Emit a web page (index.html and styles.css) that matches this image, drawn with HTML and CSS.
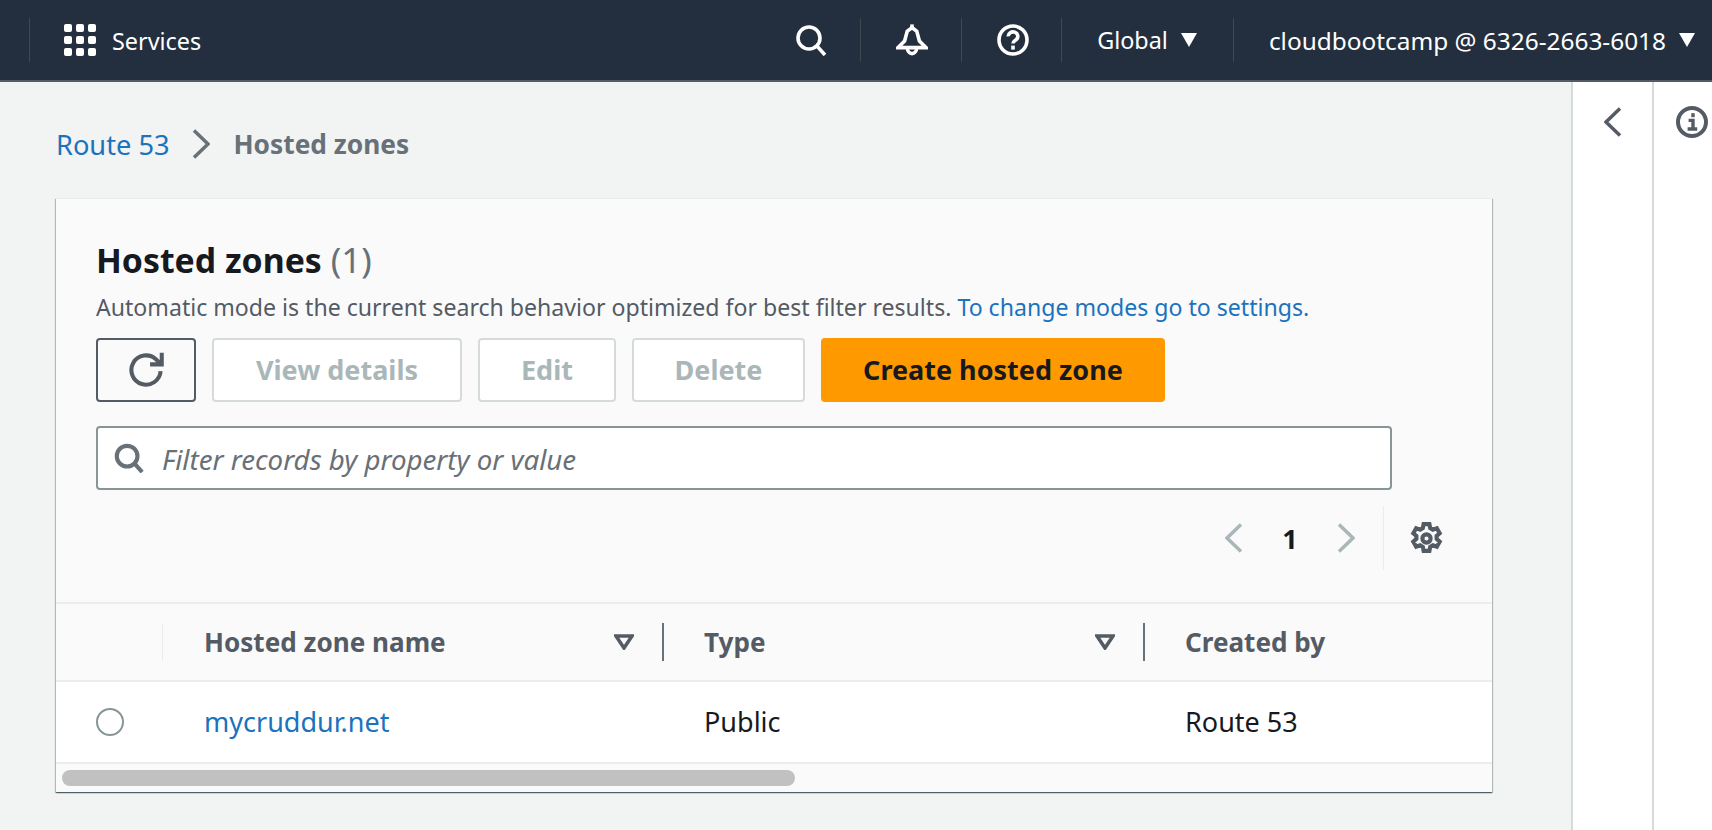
FILE: index.html
```html
<!DOCTYPE html>
<html lang="en">
<head>
    <meta charset="UTF-8">
    <meta name="viewport" content="width=device-width, initial-scale=1.0">
    <title>Route 53 - Hosted zones</title>
    <link rel="stylesheet" href="styles.css">
</head>
<body>
    <header class="topnav">
        <div class="nav-services">
            <svg class="grid-icon" viewBox="0 0 32 32">
                <rect x="0" y="0" width="8" height="8" rx="2"/><rect x="12" y="0" width="8" height="8" rx="2"/><rect x="24" y="0" width="8" height="8" rx="2"/>
                <rect x="0" y="12" width="8" height="8" rx="2"/><rect x="12" y="12" width="8" height="8" rx="2"/><rect x="24" y="12" width="8" height="8" rx="2"/>
                <rect x="0" y="24" width="8" height="8" rx="2"/><rect x="12" y="24" width="8" height="8" rx="2"/><rect x="24" y="24" width="8" height="8" rx="2"/>
            </svg>
            <span>Services</span>
        </div>
        <div class="nav-right">
            <div class="nav-item nav-search">
                <svg class="nav-icon" viewBox="0 0 16 16"><circle cx="7" cy="7" r="5.500"/><path d="M10.800 10.800l4.200 4.700"/></svg>
            </div>
            <div class="nav-item nav-bell">
                <svg class="nav-icon" viewBox="0 0 16 16"><path d="M8 1.800L5.600 3.600 4.300 8.500 1 11.800h14l-3.300-3.300-1.300-4.900z"/><path d="M8 .2v1.600"/><path d="M5.700 12a2.300 2.800 0 004.600 0"/></svg>
            </div>
            <div class="nav-item nav-help">
                <svg class="nav-icon" viewBox="0 0 16 16"><circle cx="8" cy="8" r="7"/><path d="M5.600 6.200a2.400 2.200 0 114.200 1.400c-.8.800-1.800 1-1.800 2.200"/><path d="M8 10.800v2"/></svg>
            </div>
            <div class="nav-item nav-region">
                <span>Global</span><span class="nav-caret"></span>
            </div>
            <div class="nav-item nav-account">
                <span>cloudbootcamp @ 6326-2663-6018</span><span class="nav-caret"></span>
            </div>
        </div>
    </header>

    <div class="layout">
        <main class="content">
            <nav class="breadcrumb">
                <a class="link" href="#">Route 53</a>
                <svg class="crumb-chevron" viewBox="0 0 18 30"><path d="M2 1.500L16 15 2 28.500"/></svg>
                <span class="crumb-current">Hosted zones</span>
            </nav>

            <section class="card">
                <div class="card-head">
                    <h1 class="card-title">Hosted zones <span class="count">(1)</span></h1>
                    <p class="card-desc">Automatic mode is the current search behavior optimized for best filter results. <a class="link" href="#">To change modes go to settings.</a></p>
                    <div class="actions">
                        <button class="btn btn-icon">
                            <svg viewBox="0 0 16 16"><path d="M14.500 8.500A6.500 6.500 0 1112.400 3.200L14.500 5.200"/><path d="M9.800 5.500h5.200V.3"/></svg>
                        </button>
                        <button class="btn btn-view" disabled>View details</button>
                        <button class="btn btn-edit" disabled>Edit</button>
                        <button class="btn btn-delete" disabled>Delete</button>
                        <button class="btn btn-primary">Create hosted zone</button>
                    </div>
                    <div class="filter">
                        <svg viewBox="0 0 16 16"><circle cx="7" cy="7" r="5.500"/><path d="M11 11l4 4.500"/></svg>
                        <span class="filter-text">Filter records by property or value</span>
                    </div>
                    <div class="pager">
                        <svg class="pager-chevron" viewBox="0 0 18 30"><path d="M16 1.500L2 15l14 13.500"/></svg>
                        <span class="page-num">1</span>
                        <svg class="pager-chevron" viewBox="0 0 18 30"><path d="M2 1.500L16 15 2 28.500"/></svg>
                        <div class="pager-settings">
                            <svg viewBox="0 0 16 16"><circle cx="8" cy="8" r="2"/><path d="M6.600 1h2.800l.4 2 1.300.7 1.900-.7 1.400 2.500-1.500 1.300v1.400l1.500 1.300-1.400 2.500-1.900-.7-1.300.7-.4 2H6.600l-.4-2-1.300-.7-1.900.7-1.400-2.500 1.500-1.300V6.800L1.600 5.500 3 3l1.900.7 1.300-.7z"/></svg>
                        </div>
                    </div>
                </div>

                <div class="table">
                    <div class="table-row table-header">
                        <div class="cell cell-select"></div>
                        <div class="cell cell-name">
                            <span>Hosted zone name</span>
                            <svg class="sort-caret" viewBox="0 0 20 16"><path d="M2 2h16l-8 12z"/></svg>
                        </div>
                        <div class="cell cell-type">
                            <span>Type</span>
                            <svg class="sort-caret" viewBox="0 0 20 16"><path d="M2 2h16l-8 12z"/></svg>
                        </div>
                        <div class="cell cell-created"><span>Created by</span></div>
                    </div>
                    <div class="table-row table-body">
                        <div class="cell cell-select"><span class="radio"></span></div>
                        <div class="cell cell-name"><a class="link" href="#">mycruddur.net</a></div>
                        <div class="cell cell-type">Public</div>
                        <div class="cell cell-created">Route 53</div>
                    </div>
                </div>
                <div class="scrollbar"><div class="scroll-thumb"></div></div>
            </section>
        </main>

        <aside class="side-panel side-toggle">
            <svg viewBox="0 0 18 30"><path d="M16 1.500L2 15l14 13.500"/></svg>
        </aside>
        <aside class="side-panel side-info">
            <svg viewBox="0 0 16 16"><circle cx="8" cy="8" r="7"/><path class="info-mark" d="M6.300 7.200h2.200v4.300M5.800 11.500h4.800"/><path class="info-mark" d="M8.500 3.600v2"/></svg>
        </aside>
    </div>
</body>
</html>
```

FILE: styles.css
```css
* {
    box-sizing: border-box;
}
html, body {
    height: 100%;
}
body {
    margin: 0;
    font-family: "Noto Sans", "Open Sans", sans-serif;
    font-size: 24px;
    color: #16191f;
    background-color: #f2f3f3;
    display: flex;
    flex-direction: column;
    overflow: hidden;
}
.link {
    color: #1b72bd;
    text-decoration: none;
}

/* top bar */
.topnav {
    flex: none;
    height: 82px;
    background-color: #232f3e;
    border-bottom: 2px solid #545b64;
    color: #fff;
    display: flex;
    align-items: center;
    justify-content: space-between;
    padding: 0 17px 0 29px;
}
.nav-services {
    height: 44px;
    display: flex;
    align-items: center;
    gap: 16px;
    padding-left: 34px;
    border-left: 1px solid #414750;
    font-size: 23.400px;
}
.nav-services span {
    padding-top: 1px;
}
.grid-icon {
    width: 32px;
    height: 32px;
    fill: #fff;
}
.nav-right {
    display: flex;
    align-items: center;
    font-size: 24.400px;
}
.nav-item {
    height: 44px;
    display: flex;
    align-items: center;
    border-right: 1px solid #414750;
}
.nav-item:last-child {
    border-right: 0;
}
.nav-icon {
    width: 32px;
    height: 32px;
    fill: none;
    stroke: #fff;
    stroke-width: 1.800;
}
.nav-search {
    padding: 0 33px 0 0;
}
.nav-bell {
    padding: 0 33px 0 35px;
}
.nav-help {
    padding: 0 32px 0 35px;
}
.nav-region {
    padding: 0 36px 0 35px;
    gap: 13px;
    font-size: 23.400px;
}
.nav-account {
    padding: 0 0 0 35px;
    gap: 13px;
}
.nav-caret {
    width: 0;
    height: 0;
    border-left: 8.500px solid transparent;
    border-right: 8.500px solid transparent;
    border-top: 14px solid #fff;
}

/* page */
.layout {
    flex: 1;
    display: flex;
    min-height: 0;
}
.content {
    flex: 1;
    padding: 0 79px 0 56px;
}
.breadcrumb {
    height: 116px;
    padding-top: 8px;
    display: flex;
    align-items: center;
    font-size: 27.200px;
}
.crumb-chevron {
    width: 18px;
    height: 30px;
    margin: 0 23px;
    fill: none;
    stroke: #687078;
    stroke-width: 3.500;
}
.crumb-current {
    font-size: 26.300px;
    font-weight: 700;
    color: #687078;
}
.side-panel {
    flex: none;
    background-color: #fff;
    border-left: 2px solid #d5dbdb;
}
.side-toggle {
    width: 81px;
    padding: 25px 0 0 31px;
}
.side-toggle svg {
    display: block;
    width: 18px;
    height: 30px;
    fill: none;
    stroke: #545b64;
    stroke-width: 3.500;
}
.side-info {
    width: 60px;
    padding: 24px 0 0 22px;
}
.side-info svg {
    display: block;
    width: 32px;
    height: 32px;
    fill: none;
    stroke: #545b64;
    stroke-width: 2;
}
.side-info .info-mark {
    stroke-width: 1.700;
}

/* card */
.card {
    height: 594px;
    background-color: #fafafa;
    box-shadow: 0 1px 1px 0 rgba(0, 28, 36, 0.5), 1px 1px 1px 0 rgba(0, 28, 36, 0.2), -1px 1px 1px 0 rgba(0, 28, 36, 0.2);
    border-top: 1px solid #eaeded;
}
.card-head {
    height: 405px;
    padding: 41px 0 0 40px;
    border-bottom: 2px solid #eaeded;
}
.card-title {
    margin: 0;
    font-size: 33.800px;
    line-height: 40px;
    font-weight: 700;
}
.count {
    font-size: 35px;
    font-weight: 400;
    color: #687078;
}
.card-desc {
    margin: 12px 0 16px;
    font-size: 23.100px;
    line-height: 30px;
    color: #545b64;
}
.actions {
    display: flex;
    gap: 16px;
}
.btn {
    height: 64px;
    font-family: inherit;
    font-size: 27px;
    font-weight: 700;
    border: 2px solid #d5dbdb;
    border-radius: 4px;
    background-color: #fff;
    color: #aab7b8;
    padding: 0 0 2px;
}
.btn-icon {
    width: 100px;
    border-color: #545b64;
    background-color: #fafafa;
    padding: 0;
}
.btn-icon svg {
    display: block;
    width: 36px;
    height: 36px;
    margin: 0 auto;
    fill: none;
    stroke: #545b64;
    stroke-width: 1.800;
}
.btn-view {
    width: 250px;
}
.btn-edit {
    width: 138px;
}
.btn-delete {
    width: 173px;
}
.btn-primary {
    width: 344px;
    border: 0;
    background-color: #f90;
    color: #16191f;
}
.filter {
    width: 1296px;
    height: 64px;
    margin-top: 24px;
    display: flex;
    align-items: center;
    gap: 18px;
    padding-left: 16px;
    background-color: #fff;
    border: 2px solid #879596;
    border-radius: 4px;
}
.filter svg {
    width: 30px;
    height: 30px;
    fill: none;
    stroke: #687078;
    stroke-width: 2.200;
}
.filter-text {
    padding-top: 1px;
    font-size: 27.700px;
    font-style: italic;
    color: #687078;
}
.pager {
    height: 64px;
    margin-top: 16px;
    display: flex;
    align-items: center;
    justify-content: flex-end;
    padding-right: 49px;
}
.pager-chevron {
    width: 18px;
    height: 30px;
    fill: none;
    stroke: #aab7b8;
    stroke-width: 3.500;
}
.page-num {
    width: 94px;
    text-align: center;
    font-size: 27px;
    font-weight: 700;
    color: #16191f;
}
.pager-settings {
    height: 64px;
    margin-left: 28px;
    padding-left: 26px;
    display: flex;
    align-items: center;
    border-left: 1px solid #eaeded;
}
.pager-settings svg {
    width: 33px;
    height: 33px;
    fill: none;
    stroke: #545b64;
    stroke-width: 2;
}

/* table */
.table-row {
    display: grid;
    grid-template-columns: 107px 501px 481px 1fr;
    align-items: center;
}
.table-header {
    height: 78px;
    border-bottom: 2px solid #eaeded;
    font-size: 26.100px;
    font-weight: 700;
    color: #545b64;
}
.table-body {
    height: 82px;
    background-color: #fff;
    border-bottom: 2px solid #eaeded;
    font-size: 27px;
}
.cell {
    display: flex;
    align-items: center;
    justify-content: space-between;
    padding-left: 41px;
}
.cell-type, .cell-created {
    padding-left: 40px;
}
.table-body .cell {
    padding-bottom: 2px;
}
.table-header .cell {
    height: 38px;
    border-right: 2px solid #687078;
    padding-right: 28px;
}
.table-header .cell-select {
    border-right: 1px solid #eaeded;
}
.table-header .cell-created {
    border-right: 0;
}
.table-body .cell-select {
    padding: 0 0 0 40px;
}
.sort-caret {
    width: 20px;
    height: 16px;
    fill: none;
    stroke: #545b64;
    stroke-width: 3.500;
}
.radio {
    width: 28px;
    height: 28px;
    border: 2px solid #879596;
    border-radius: 50%;
    background-color: #fff;
}
.scrollbar {
    height: 25px;
    padding: 6px 6px 0;
}
.scroll-thumb {
    width: 733px;
    height: 16px;
    border-radius: 8px;
    background-color: #c1c1c1;
}
```
